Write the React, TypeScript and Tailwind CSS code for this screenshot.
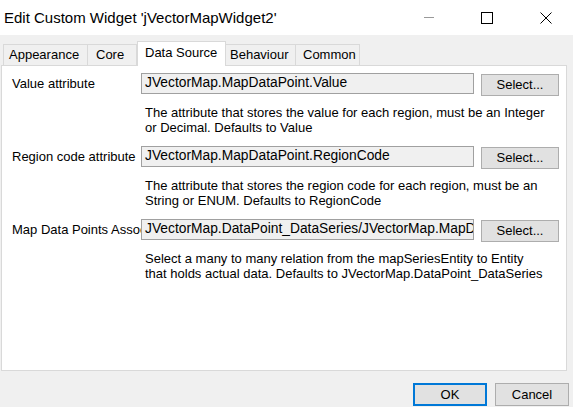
import React from "react";

const font = { fontFamily: '"Liberation Sans", Arial, sans-serif' };

const tabs = [
  { label: "Appearance", w: "w-[85px]", pl: "pl-[5px]" },
  { label: "Core", w: "w-[49px]", pl: "pl-[8px]" },
  { label: "Data Source", w: "w-[89px]", pl: "pl-[7px]", active: true },
  { label: "Behaviour", w: "w-[70px]", pl: "pl-[4px]" },
  { label: "Common", w: "w-[64px]", pl: "pl-[7px]" },
];

const fields = [
  {
    label: "Value attribute",
    value: "JVectorMap.MapDataPoint.Value",
    desc: ["The attribute that stores the value for each region, must be an Integer", "or Decimal. Defaults to Value"],
  },
  {
    label: "Region code attribute",
    value: "JVectorMap.MapDataPoint.RegionCode",
    desc: ["The attribute that stores the region code for each region, must be an", "String or ENUM. Defaults to RegionCode"],
  },
  {
    label: "Map Data Points Association",
    value: "JVectorMap.DataPoint_DataSeries/JVectorMap.MapDataPoint",
    desc: ["Select a many to many relation from the mapSeriesEntity to Entity", "that holds actual data. Defaults to JVectorMap.DataPoint_DataSeries"],
  },
];

function WinButton({ children, primary }: { children: React.ReactNode; primary?: boolean }) {
  return (
    <div
      className={
        "flex h-[23px] items-center justify-center bg-[#e1e1e1] text-[13px] text-black " +
        (primary ? "w-[74px] border-2 border-[#0078d7]" : "w-[74px] border border-[#adadad]")
      }
    >
      {children}
    </div>
  );
}

export default function App() {
  return (
    <div className="flex h-[407px] w-[573px] flex-col overflow-hidden bg-[#f0f0f0] text-black" style={font}>
      {/* title bar */}
      <div className="flex h-[35px] items-center bg-white">
        <div className="pl-[4px] text-[15px] leading-none">Edit Custom Widget 'jVectorMapWidget2'</div>
        <div className="ml-auto flex items-center">
          <div className="mr-[47px] h-px w-[10px] bg-[#999]" />
          <div className="mr-[47px] h-[12px] w-[12px] border border-black" />
          <svg width="12" height="12" viewBox="0 0 12 12" className="mr-[21px]">
            <path d="M0.5 0.5 L11.5 11.5 M11.5 0.5 L0.5 11.5" stroke="black" strokeWidth="1" />
          </svg>
        </div>
      </div>

      {/* tabs */}
      <div className="mt-[6px] flex h-[24px] items-end pl-[3px]">
        {tabs.map((t) =>
          t.active ? (
            <div
              key={t.label}
              className={`${t.w} ${t.pl} relative z-10 -mb-px flex h-[25px] items-center border-x border-t border-[#d9d9d9] bg-white pb-[2px] text-[13px]`}
            >
              {t.label}
            </div>
          ) : (
            <div
              key={t.label}
              className={`${t.w} ${t.pl} flex h-[21px] items-center border-r border-t border-[#d9d9d9] first:border-l bg-[#f0f0f0] text-[13px]`}
            >
              {t.label}
            </div>
          )
        )}
      </div>

      {/* panel */}
      <div className="ml-px mr-[6px] h-[306px] border border-[#d9d9d9] bg-white pt-[7px] text-[13px]">
        {fields.map((f) => (
          <div key={f.label} className="h-[73px]">
            <div className="flex h-[23px] items-start">
              <div className="flex h-[21px] w-[139px] shrink-0 items-center overflow-hidden whitespace-nowrap pl-[10px]">
                {f.label}
              </div>
              <div className="flex h-[21px] w-[333px] shrink-0 items-center overflow-hidden whitespace-nowrap border border-[#a0a0a0] bg-[#f0f0f0] pl-[3px] text-[13.8px]">
                {f.value}
              </div>
              <div className="ml-[7px] mt-px">
                <div className="flex h-[22px] w-[78px] items-center justify-center border border-[#adadad] bg-[#e1e1e1]">
                  Select...
                </div>
              </div>
            </div>
            <div className="mt-[9px] pl-[143px] leading-[15px]">
              {f.desc.map((d) => (
                <div key={d} className="whitespace-nowrap">
                  {d}
                </div>
              ))}
            </div>
          </div>
        ))}
      </div>

      {/* footer */}
      <div className="mt-[12px] flex justify-end gap-[8px] pr-[4px]">
        <WinButton primary>OK</WinButton>
        <WinButton>Cancel</WinButton>
      </div>
    </div>
  );
}
